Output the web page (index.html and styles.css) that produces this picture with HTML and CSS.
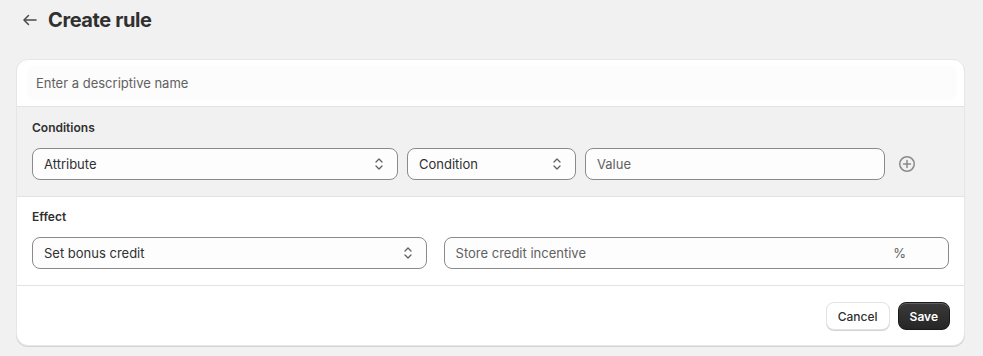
FILE: index.html
```html
<!DOCTYPE html>
<html lang="en">
<head>
    <meta charset="UTF-8">
    <meta name="viewport" content="width=device-width, initial-scale=1.0">
    <title>Create rule</title>
    <link rel="stylesheet" href="styles.css">
</head>
<body>

    <header class="page-header">
        <button class="back-btn" type="button" aria-label="Back">
            <svg width="16" height="16" viewBox="0 0 16 16" fill="none" stroke="#4a4a4a" stroke-width="1.5" stroke-linecap="round" stroke-linejoin="round">
                <path d="M14 8H2.5"/>
                <path d="M6.5 3.5L2 8l4.5 4.5"/>
            </svg>
        </button>
        <h1>Create rule</h1>
    </header>

    <div class="card">
        <div class="name-row">
            <input class="name-input" type="text" placeholder="Enter a descriptive name">
        </div>

        <section class="section conditions">
            <h2>Conditions</h2>
            <div class="field-row">
                <div class="select attr-select">
                    <span>Attribute</span>
                    <svg class="chev" width="10" height="14" viewBox="0 0 10 14" fill="none" stroke="#616161" stroke-width="1.3" stroke-linecap="round" stroke-linejoin="round">
                        <path d="M2 5l3-3 3 3"/>
                        <path d="M2 9l3 3 3-3"/>
                    </svg>
                </div>
                <div class="select cond-select">
                    <span>Condition</span>
                    <svg class="chev" width="10" height="14" viewBox="0 0 10 14" fill="none" stroke="#616161" stroke-width="1.3" stroke-linecap="round" stroke-linejoin="round">
                        <path d="M2 5l3-3 3 3"/>
                        <path d="M2 9l3 3 3-3"/>
                    </svg>
                </div>
                <div class="text-field value-field">
                    <span class="placeholder">Value</span>
                </div>
                <button class="add-btn" type="button" aria-label="Add condition">
                    <svg width="18" height="18" viewBox="0 0 18 18" fill="none" stroke="#8a8a8a" stroke-width="1.5" stroke-linecap="round">
                        <circle cx="9" cy="9" r="7.25"/>
                        <path d="M9 5.5v7M5.5 9h7"/>
                    </svg>
                </button>
            </div>
        </section>

        <section class="section effect">
            <h2>Effect</h2>
            <div class="field-row effect-row">
                <div class="select effect-select">
                    <span>Set bonus credit</span>
                    <svg class="chev" width="10" height="14" viewBox="0 0 10 14" fill="none" stroke="#616161" stroke-width="1.3" stroke-linecap="round" stroke-linejoin="round">
                        <path d="M2 5l3-3 3 3"/>
                        <path d="M2 9l3 3 3-3"/>
                    </svg>
                </div>
                <div class="text-field credit-field">
                    <span class="placeholder">Store credit incentive</span>
                    <span class="suffix">%</span>
                </div>
            </div>
        </section>

        <footer class="card-footer">
            <button class="btn btn-cancel" type="button">Cancel</button>
            <button class="btn btn-save" type="button">Save</button>
        </footer>
    </div>

</body>
</html>
```

FILE: styles.css
```css
* {
    margin: 0;
    padding: 0;
    box-sizing: border-box;
}
body {
    font-family: Inter, "Liberation Sans", Arial, sans-serif;
    background-color: #f1f1f1;
    color: #303030;
    font-size: 13px;
    width: 983px;
    height: 356px;
    overflow: hidden;
}
.page-header {
    height: 40px;
    display: flex;
    align-items: center;
    padding-left: 22px;
    margin-bottom: 19px;
}
.back-btn {
    width: 16px;
    height: 16px;
    border: none;
    background: none;
    display: flex;
    margin-right: 10px;
}
h1 {
    font-size: 20px;
    font-weight: 700;
    color: #303030;
    letter-spacing: -0.4px;
}
.card {
    margin-left: 16px;
    width: 949px;
    background-color: #fff;
    border: 1px solid #e6e6e6;
    border-radius: 12px;
    box-shadow: 0 1px 0 #d4d4d4;
    overflow: hidden;
}
.name-row {
    padding: 6px 7px 6px 10px;
}
.name-input {
    width: 100%;
    height: 34px;
    border: none;
    background-color: #fcfcfc;
    border-radius: 8px;
    padding: 0 9px;
    font-family: inherit;
    font-size: 13px;
    outline: none;
}
.name-input::placeholder {
    color: #616161;
}
.section {
    border-top: 1px solid #e3e3e3;
    padding: 12px 15px 16px 15px;
}
.conditions {
    background-color: #f1f1f1;
    padding-top: 13px;
    padding-bottom: 16px;
}
.section h2 {
    font-size: 12px;
    font-weight: 600;
    line-height: 16px;
    color: #303030;
    margin-bottom: 12px;
}
.field-row {
    display: flex;
    align-items: center;
    gap: 9px;
}
.select,
.text-field {
    height: 32px;
    border: 1px solid #8a8a8a;
    border-radius: 8px;
    background-color: #fdfdfd;
    display: flex;
    align-items: center;
    justify-content: space-between;
    padding: 0 11px;
    font-size: 13px;
}
.select .chev {
    margin-right: 2px;
}
.attr-select {
    width: 366px;
}
.cond-select {
    width: 169px;
}
.value-field {
    width: 300px;
}
.placeholder {
    color: #616161;
}
.add-btn {
    border: none;
    background: none;
    display: flex;
    margin-left: 4px;
}
.effect-row {
    gap: 17px;
}
.effect-select {
    width: 395px;
}
.credit-field {
    width: 506px;
    padding-right: 42px;
}
.suffix {
    color: #616161;
}
.card-footer {
    border-top: 1px solid #e3e3e3;
    padding: 16px 14px 15px 0;
    display: flex;
    justify-content: flex-end;
    gap: 8px;
}
.btn {
    height: 28px;
    border-radius: 8px;
    font-family: inherit;
    font-size: 12px;
    font-weight: 600;
    padding: 0 11px;
    cursor: pointer;
}
.btn-cancel {
    background-color: #fff;
    color: #303030;
    border: 1px solid #e3e3e3;
    box-shadow: 0 1px 0 #d4d4d4;
    font-weight: 500;
}
.btn-save {
    background: linear-gradient(#3a3a3a, #262626);
    color: #fff;
    border: 1px solid #1a1a1a;
    box-shadow: inset 0 1px 0 rgba(255, 255, 255, 0.2);
}
```
